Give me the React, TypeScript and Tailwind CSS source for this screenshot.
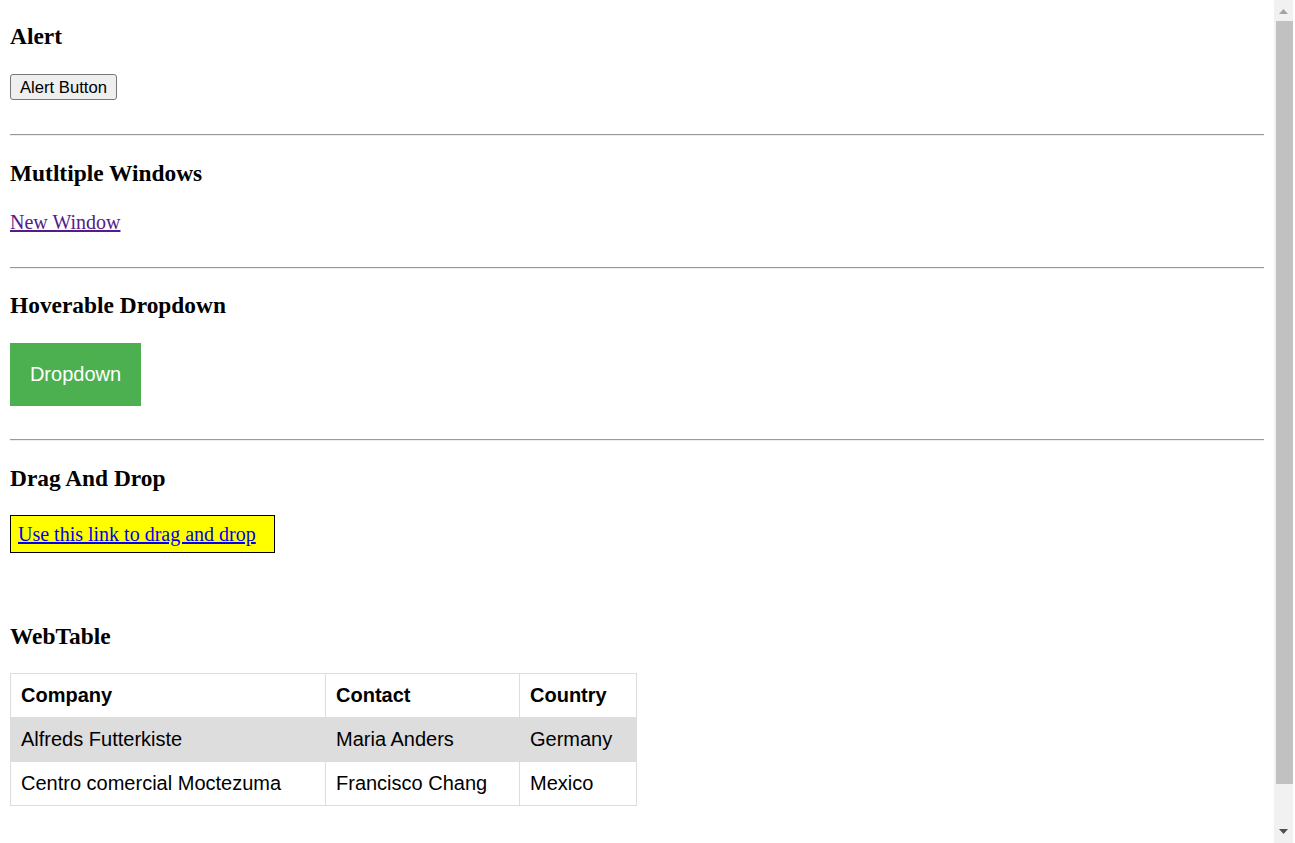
import React from 'react';

const serif = "font-['Liberation_Serif','Times_New_Roman',serif]";
const sans = "font-['Liberation_Sans',Arial,sans-serif]";

const Heading: React.FC<{ children: React.ReactNode; className?: string }> = ({ children, className = '' }) => (
  <h3 className={`${serif} text-[23.4px] leading-[26.9px] font-bold text-black ${className}`}>{children}</h3>
);

const Rule: React.FC<{ className?: string }> = ({ className = '' }) => (
  <div className={`h-[2px] border-t border-b border-t-[#9a9a9a] border-b-[#eeeeee] ${className}`} />
);

const rows = [
  ['Alfreds Futterkiste', 'Maria Anders', 'Germany'],
  ['Centro comercial Moctezuma', 'Francisco Chang', 'Mexico'],
];

const Scrollbar: React.FC = () => (
  <div className="flex w-[21px] shrink-0">
    <div className="flex w-[19px] flex-col bg-[#f1f1f1]">
      <div className="flex h-[21px] items-start justify-center pt-[9px]">
        <svg width="9" height="5" viewBox="0 0 9 5">
          <polygon points="0,5 9,5 4.5,0" fill="#a3a3a3" />
        </svg>
      </div>
      <div className="ml-[2px] h-[763px] w-[17px] bg-[#c1c1c1]" />
      <div className="flex-1" />
      <div className="flex h-[21px] items-start justify-center pt-[7px]">
        <svg width="9" height="5" viewBox="0 0 9 5">
          <polygon points="0,0 9,0 4.5,5" fill="#505050" />
        </svg>
      </div>
    </div>
    <div className="w-[2px] bg-white" />
  </div>
);

export default function App() {
  return (
    <div className="flex h-[843px] w-full overflow-hidden bg-white text-black">
      <div className="min-w-0 flex-1 px-[10px] pt-[23.4px]">
        {/* Alert */}
        <Heading>Alert</Heading>
        <button
          className={`${sans} mt-[23.4px] flex h-[26px] w-[107px] items-center justify-center rounded-[3px] border border-[#767676] bg-[#efefef] pt-[3px] text-[16.67px] leading-none text-black`}
        >
          Alert Button
        </button>
        <Rule className="mt-[34px]" />

        {/* Windows */}
        <Heading className="mt-[24.4px]">Mutltiple Windows</Heading>
        <p className={`${serif} mt-[24.4px] text-[20px] leading-[23px]`}>
          <a href="#" className="text-[#551a8b] underline">New Window</a>
        </p>
        <Rule className="mt-[33px]" />

        {/* Dropdown */}
        <Heading className="mt-[22.6px]">Hoverable Dropdown</Heading>
        <button
          className={`${sans} mt-[23.7px] h-[63px] w-[131px] bg-[#4caf50] text-[20px] leading-[23px] text-white`}
        >
          Dropdown
        </button>
        <Rule className="mt-[33px]" />

        {/* Drag and drop */}
        <Heading className="mt-[24.4px]">Drag And Drop</Heading>
        <div className={`${serif} mt-[23.2px] h-[38px] w-[265px] border border-black bg-[#ffff00] pl-[7px] pt-[7px] text-[20px] leading-[23px]`}>
          <a href="#" className="text-[#0000ee] underline">Use this link to drag and drop</a>
        </div>

        {/* Table */}
        <Heading className="mt-[70px]">WebTable</Heading>
        <table className={`${sans} mt-[23.4px] w-[627px] border-collapse text-[20px] leading-[23px]`}>
          <thead>
            <tr>
              <th className="w-[315px] border border-[#dddddd] p-[10px] text-left font-bold">Company</th>
              <th className="w-[194px] border border-[#dddddd] p-[10px] text-left font-bold">Contact</th>
              <th className="border border-[#dddddd] p-[10px] text-left font-bold">Country</th>
            </tr>
          </thead>
          <tbody>
            {rows.map((r, i) => (
              <tr key={i} className={i === 0 ? 'bg-[#dddddd]' : ''}>
                {r.map((c) => (
                  <td key={c} className="border border-[#dddddd] p-[10px]">{c}</td>
                ))}
              </tr>
            ))}
          </tbody>
        </table>
      </div>
      <Scrollbar />
    </div>
  );
}
